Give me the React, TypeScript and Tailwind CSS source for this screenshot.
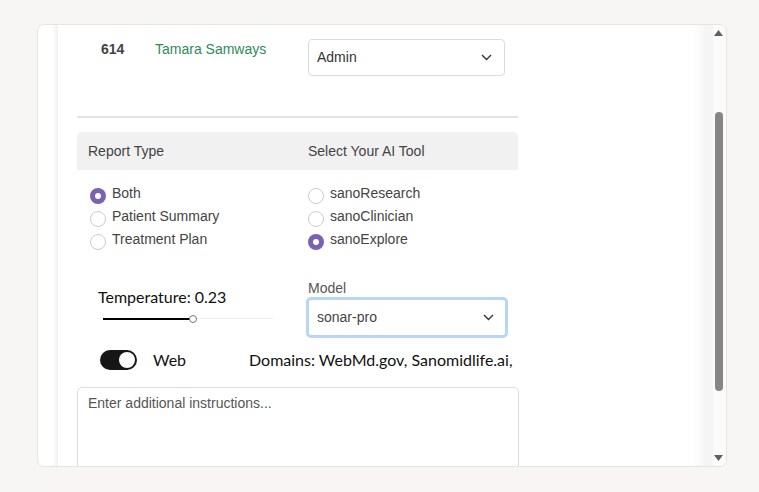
import React from "react";

const reportTypes = [
  { id: "both", label: "Both", checked: true },
  { id: "summary", label: "Patient Summary", checked: false },
  { id: "plan", label: "Treatment Plan", checked: false },
];

const aiTools = [
  { id: "research", label: "sanoResearch", checked: false },
  { id: "clinician", label: "sanoClinician", checked: false },
  { id: "explore", label: "sanoExplore", checked: true },
];

const Chevron = () => (
  <svg width="11" height="7" viewBox="0 0 11 7" className="shrink-0">
    <polyline points="1,1 5.5,5.5 10,1" fill="none" stroke="#333" strokeWidth="1.4" />
  </svg>
);

const Radio = ({ checked }: { checked: boolean }) =>
  checked ? (
    <span className="flex h-[16px] w-[16px] shrink-0 items-center justify-center rounded-full bg-[#7b61b1]">
      <span className="h-[6px] w-[6px] rounded-full bg-white" />
    </span>
  ) : (
    <span className="h-[16px] w-[16px] shrink-0 rounded-full border border-[#cccccc] bg-white" />
  );

const RadioGroup = ({ items }: { items: typeof reportTypes }) => (
  <div className="flex flex-col">
    {items.map((item) => (
      <label key={item.id} className="flex h-[22.8px] items-center gap-[6px]">
        <Radio checked={item.checked} />
        <span className="-mt-[5px] text-[14px] text-[#444]">{item.label}</span>
      </label>
    ))}
  </div>
);

const App = () => {
  return (
    <main className="h-[492px] w-[759px] overflow-hidden bg-[#f7f6f5] pl-[37px] pt-[24px] font-['Liberation_Sans',Arial,sans-serif]">
      <div className="flex h-[443px] w-[690px] overflow-hidden rounded-[7px] border border-[#e3e5e8] bg-white">
        {/* left edge */}
        <div className="w-[14px] shrink-0" />
        <div className="w-[6px] shrink-0 bg-gradient-to-r from-white to-[#f0f0f0]" />

        {/* content */}
        <section className="w-[634px] shrink-0 pl-[19px]">
          <div className="mt-[14px] flex items-start">
            <p className="w-[78px] pl-[24px] text-[14px] font-bold leading-[20px] text-[#444]">614</p>
            <p className="w-[153px] text-[14px] leading-[20px] text-[#2e8b57]">Tamara Samways</p>
            <div className="flex h-[37px] w-[197px] items-center justify-between rounded-[4px] border border-[#dcdcdc] pl-[8px] pr-[12px]">
              <span className="text-[14px] text-[#333]">Admin</span>
              <Chevron />
            </div>
          </div>

          <div className="mt-[40px] h-[2px] w-[441px] bg-[#e3e3e3]" />

          <div className="mt-[14px] flex h-[38px] w-[441px] items-center rounded-t-[5px] bg-[#f1f1f1] text-[14px] text-[#444]">
            <span className="w-[231px] pl-[11px]">Report Type</span>
            <span>Select Your AI Tool</span>
          </div>

          <div className="mt-[15px] flex">
            <div className="w-[231px] pl-[13px]">
              <RadioGroup items={reportTypes} />
            </div>
            <RadioGroup items={aiTools} />
          </div>

          <div className="mt-[24px] flex">
            <div className="w-[229px] pl-[21px] pt-[10px]">
              <p className="font-['Lato',sans-serif] text-[16px] leading-[20px] text-[#111]">Temperature: 0.23</p>
              <div className="relative ml-[5px] mt-[8px] h-[8px] w-[170px]">
                <div className="absolute left-0 top-[3px] h-[1px] w-full bg-[#ececec]" />
                <div className="absolute left-0 top-[3px] h-[2px] w-[88px] bg-black" />
                <div className="absolute left-[86px] top-0 h-[8px] w-[8px] rounded-full border border-[#777] bg-white" />
              </div>
            </div>
            <div>
              <p className="pl-[2px] pt-[2px] text-[14px] leading-[18px] text-[#555]">Model</p>
              <div className="flex h-[41px] w-[202px] items-center justify-between rounded-[5px] border-[3px] border-[#b8d4f6] pl-[8px] pr-[11px]">
                <span className="text-[14px] text-[#444]">sonar-pro</span>
                <Chevron />
              </div>
            </div>
          </div>

          <div className="mt-[10px] flex items-center font-['Lato',sans-serif] text-[16px] text-[#111]">
            <div className="ml-[23px] flex h-[20px] w-[37px] items-center justify-end rounded-full bg-[#161616] pr-[2px]">
              <span className="h-[16px] w-[16px] rounded-full bg-white" />
            </div>
            <span className="ml-[16px] w-[96px]">Web</span>
            <span>Domains: WebMd.gov, Sanomidlife.ai,</span>
          </div>

          <div className="mt-[15px] h-[100px] w-[442px] rounded-[5px] border border-[#dddddd] px-[10px] pt-[5px]">
            <p className="text-[14px] text-[#555]">Enter additional instructions...</p>
          </div>
        </section>

        {/* right edge + scrollbar */}
        <div className="w-[14px] shrink-0 bg-gradient-to-r from-white to-[#f5f5f5]" />
        <div className="w-[7px] shrink-0 bg-[#f5f5f5]" />
        <div className="flex w-[13px] shrink-0 flex-col items-center bg-[#fbfbfb] pr-[2px]">
          <svg width="9" height="6" viewBox="0 0 9 6" className="mt-[5px]">
            <polygon points="0,6 4.5,0 9,6" fill="#606060" />
          </svg>
          <div className="mt-[76px] h-[279px] w-[8px] rounded-full bg-[#868686]" />
          <div className="flex-1" />
          <svg width="9" height="6" viewBox="0 0 9 6" className="mb-[5px]">
            <polygon points="0,0 4.5,6 9,0" fill="#606060" />
          </svg>
        </div>
      </div>
    </main>
  );
};

export default App;
